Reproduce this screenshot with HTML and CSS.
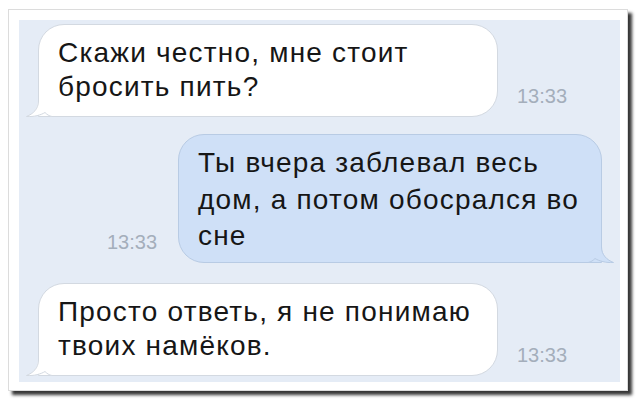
FILE: index.html
```html
<!DOCTYPE html>
<html>
<head>
<meta charset="utf-8">
<link rel="stylesheet" href="styles.css">
</head>
<body>
<div class="frame">
  <div class="chat">
    <div class="row row-in row-first">
      <div class="bubble bubble-in">
        <p class="msg">Скажи честно, мне стоит<br>бросить пить?</p>
        <svg class="tail tail-in" width="26" height="26" viewBox="0 0 26 26"><path class="tail-fill" d="M12,0 L12,10 C12,18 7,23 0.5,25.5 C8,26 15,24 19,21.5 C21,23.5 23,25 26,25.5 L26,0 Z"/><path class="tail-line" d="M12.5,0 L12.5,10 C12.5,18 7,23 0.5,25.5 C8,26 15,24 19,21.5 C21,23.5 23,25 26,25.5"/></svg>
      </div>
      <span class="time">13:33</span>
    </div>
    <div class="row row-out">
      <span class="time">13:33</span>
      <div class="bubble bubble-out">
        <p class="msg">Ты вчера заблевал весь<br>дом, а потом обосрался во<br>сне</p>
        <svg class="tail tail-out" width="26" height="26" viewBox="0 0 26 26"><path class="tail-fill" d="M14,0 L14,10 C14,18 19,23 25.5,25.5 C18,26 11,24 7,21.5 C5,23.5 3,25 0,25.5 L0,0 Z"/><path class="tail-line" d="M13.5,0 L13.5,10 C13.5,18 19,23 25.5,25.5 C18,26 11,24 7,21.5 C5,23.5 3,25 0,25.5"/></svg>
      </div>
    </div>
    <div class="row row-in">
      <div class="bubble bubble-in">
        <p class="msg">Просто ответь, я не понимаю<br>твоих намёков.</p>
        <svg class="tail tail-in" width="26" height="26" viewBox="0 0 26 26"><path class="tail-fill" d="M12,0 L12,10 C12,18 7,23 0.5,25.5 C8,26 15,24 19,21.5 C21,23.5 23,25 26,25.5 L26,0 Z"/><path class="tail-line" d="M12.5,0 L12.5,10 C12.5,18 7,23 0.5,25.5 C8,26 15,24 19,21.5 C21,23.5 23,25 26,25.5"/></svg>
      </div>
      <span class="time">13:33</span>
    </div>
  </div>
</div>
</body>
</html>
```
FILE: styles.css
```css
* { box-sizing: border-box; }
html, body { margin: 0; padding: 0; background: #ffffff; }
body { width: 640px; height: 402px; overflow: hidden; font-family: "Liberation Sans", Arial, sans-serif; }

.frame {
  margin: 9px 0 0 8px;
  width: 620px;
  height: 382px;
  padding: 10px 7px 7px 10px;
  background: #ffffff;
  border: 1px solid #dcdcdc;
  box-shadow: 4px 4px 3px rgba(20, 20, 20, 0.85);
}

.chat {
  width: 601px;
  height: 362px;
  background: #e5ecf6;
  padding: 4px 0 0 0;
  display: flex;
  flex-direction: column;
  gap: 17px;
}

.row {
  display: flex;
  align-items: flex-end;
}
.row-in { padding-left: 19px; }
.row-out { padding-left: 88px; }
.row + .row-in { margin-top: 3px; }

.bubble {
  position: relative;
  border-radius: 26px;
  border: 1px solid #d3d9e1;
}
.bubble-in {
  width: 460px;
  background: #ffffff;
  border-bottom-left-radius: 0;
  padding: 11px 10px 12px 19px;
}
.bubble-out {
  width: 424px;
  background: #cfe0f7;
  border-color: #b8cbe4;
  border-bottom-right-radius: 0;
  padding: 10px 10px 7px 19px;
}

.msg {
  margin: 0;
  font-size: 28px;
  letter-spacing: 1.2px;
  line-height: 34px;
  color: #161616;
}
.bubble-out .msg { line-height: 36.5px; }

.time {
  font-size: 20px;
  color: #a4aebb;
  padding-bottom: 9px;
}
.row-in .time { margin-left: 19px; }
.row-out .time { width: 71px; }

.tail { position: absolute; bottom: -1px; }
.tail-in { left: -13px; }
.tail-out { right: -13px; }
.bubble-in .tail-fill { fill: #ffffff; }
.bubble-out .tail-fill { fill: #cfe0f7; }
.tail-line { fill: none; stroke-width: 1; }
.bubble-in .tail-line { stroke: #d3d9e1; }
.bubble-out .tail-line { stroke: #b8cbe4; }
```
